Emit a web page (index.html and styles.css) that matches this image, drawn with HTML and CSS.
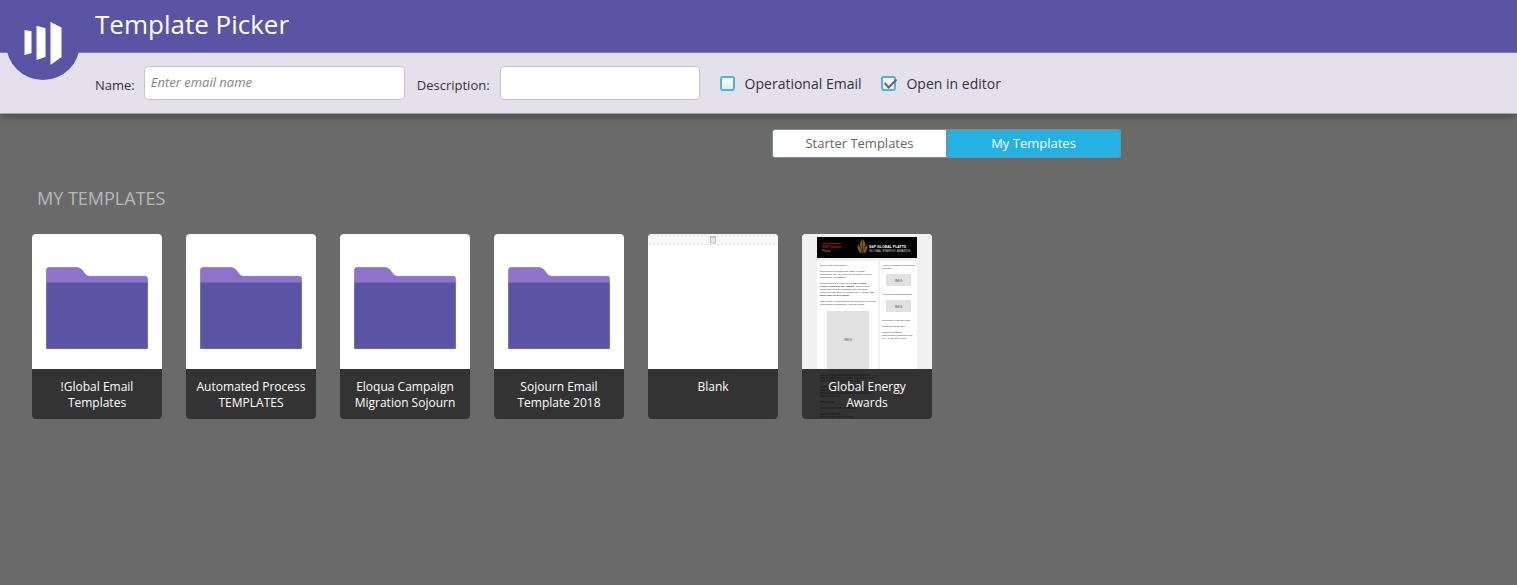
FILE: index.html
```html
<!DOCTYPE html>
<html lang="en">
<head>
<meta charset="utf-8">
<title>Template Picker</title>
<link rel="stylesheet" href="styles.css">
</head>
<body>
<svg class="defs" aria-hidden="true">
  <symbol id="folder" viewBox="0 0 102 82">
    <path d="M.5 82V3Q.5.5 3 .5h28q3 0 5 2.500l3.500 4.500q1.500 1.800 4 1.800h56q2 0 2 2V82z" fill="#8f72cc" stroke="#7a6ab4" stroke-width=".6"/>
    <path d="M.5 15.500h101V81.500H.5z" fill="#5a54a4"/>
  </symbol>
</svg>
<header class="header">
  <div class="titlebar">
    <svg class="logo" viewBox="0 0 74 74" role="img" aria-label="Logo">
      <circle cx="37" cy="37" r="37" fill="#5a54a4"/>
      <path d="M18.500 24l7 1.300v22L18.500 49zM30.500 19.700l9 2.600V51l-9 3zM44.500 16l11 5.500v29.500L44.500 59z" fill="#fff"/>
    </svg>
    <h1 class="title">Template Picker</h1>
  </div>
  <form class="toolbar">
    <label class="label" for="name">Name:</label>
    <input class="field field-name" id="name" type="text" placeholder="Enter email name">
    <label class="label" for="description">Description:</label>
    <input class="field field-description" id="description" type="text">
    <label class="option"><input class="check" type="checkbox">Operational Email</label>
    <label class="option"><input class="check" type="checkbox" checked>Open in editor</label>
  </form>
</header>
<main class="content">
  <div class="switcher">
    <button class="tab" type="button">Starter Templates</button>
    <button class="tab tab-active" type="button">My Templates</button>
  </div>
  <h2 class="heading">MY TEMPLATES</h2>
  <div class="cards">
    <article class="card"><div class="preview"><svg class="folder"><use href="#folder"/></svg></div><div class="caption">!Global Email<br>Templates</div></article>
    <article class="card"><div class="preview"><svg class="folder"><use href="#folder"/></svg></div><div class="caption">Automated Process<br>TEMPLATES</div></article>
    <article class="card"><div class="preview"><svg class="folder"><use href="#folder"/></svg></div><div class="caption">Eloqua Campaign<br>Migration Sojourn</div></article>
    <article class="card"><div class="preview"><svg class="folder"><use href="#folder"/></svg></div><div class="caption">Sojourn Email<br>Template 2018</div></article>
    <article class="card"><div class="preview">
      <svg class="thumb" viewBox="0 0 130 135">
        <path d="M0 0h130v11H0z" fill="#f7f7f9"/>
        <path d="M1 1.500h128M1 10.500h128" stroke="#dedee2" stroke-width=".7" stroke-dasharray="2 2"/>
        <rect x="62.500" y="3" width="5" height="6" fill="#e8e8e8" stroke="#b8b8b8" stroke-width=".8"/>
        <path d="M62 3h6" stroke="#aaa" stroke-width=".8"/>
      </svg></div><div class="caption">Blank</div></article>
    <article class="card"><div class="preview">
      <svg class="thumb" viewBox="0 0 130 135">
        <path d="M0 0h130v135H0z" fill="#f1f1f1"/>
        <path d="M15 27h61v108H15zM78 27h37v108H78z" fill="#fff"/>
        <path d="M15 3h100v21H15z" fill="#000"/>
        <path d="M20 9.500h19" stroke="#d6002a" stroke-width=".7"/>
        <g class="mail" font-size="3.500">
          <text x="20" y="13.500" fill="#d6002a" font-weight="bold">S&amp;P Global</text>
          <text x="20" y="17.500" fill="#999">Platts</text>
          <text x="67" y="13.500" fill="#fff" font-weight="bold">S&amp;P GLOBAL PLATTS</text>
          <text x="67" y="17.500" fill="#ccc" font-size="3.200">GLOBAL ENERGY AWARDS</text>
        </g>
        <path d="M60.500 5q4 4 2.500 8 2-1 1.800-3.500 2 5-1.800 9.500h-5q-4-5-1.500-9.500 0 2.500 1.500 3.500-1-4 2.500-8z" fill="#7d5b1c"/>
        <path d="M60.500 6v13M58.500 12l1 7M62.500 12l-1 7" stroke="#19130a" stroke-width=".6"/>
        <g class="mail" font-size="2.500" fill="#333">
          <text x="18" y="32">Dear {{lead.First Name}},</text>
          <text x="18" y="38">Exceptional professionals attain a global</text>
          <text x="18" y="41">recognition. Do you have an innovative project,</text>
          <text x="18" y="44">technology or strategy?</text>
          <text x="18" y="50">Nominations are open for the <tspan font-weight="bold">S&amp;P Global</tspan></text>
          <text x="18" y="53"><tspan font-weight="bold">Platts Global Energy Awards</tspan>. There are 19</text>
          <text x="18" y="56">categories for both business and individual</text>
          <text x="18" y="59">achievements. Enter by September 7, 2018. <tspan font-weight="bold">You</tspan></text>
          <text x="18" y="62" font-weight="bold">won't have to do it alone.</text>
          <text x="18" y="68">The category descriptions and rules help you build</text>
          <text x="18" y="71">a successful nomination, view the guide.</text>
          <text x="80" y="32">Award Presenting &amp; Reception</text>
          <text x="80" y="35">Sponsor</text>
          <text x="80" y="61">Award Presenting Sponsor</text>
          <text x="80" y="87">Interested in sponsoring?</text>
          <text x="80" y="93">Contact Matt Bonitto</text>
          <text x="80" y="99">Request Manager</text>
          <text x="80" y="102">Matt.bonitto@spglobal.com</text>
          <text x="80" y="105">Tel. +1 720 264 6678</text>
        </g>
        <path d="M84 40h25v12H84zM84 66h25v12H84zM25 77h42v58H25z" fill="#e1e1e1"/>
        <g class="mail" font-size="4" fill="#555" text-anchor="middle">
          <text x="96.500" y="47.500">IMG</text><text x="96.500" y="73.500">IMG</text><text x="46" y="106.500">IMG</text>
        </g>
      </svg></div><div class="caption">
      <svg class="ghost" viewBox="0 0 130 50" aria-hidden="true">
        <path d="M18 6h50M18 9h54M18 12h40M18 18h52M18 21h48M18 24h52M18 27h20M18 33h14M18 39h36M18 45h20M18 48h33" stroke="#242424" stroke-width="1.600" stroke-dasharray="5 .6 3 .6 7 .7"/>
      </svg>
      <span class="caption-text">Global Energy<br>Awards</span></div></article>
  </div>
</main>
</body>
</html>
```
FILE: styles.css
```css
* { box-sizing: border-box; }
body {
  margin: 0;
  min-height: 100vh;
  background: #6a6a6a;
  color: #333;
  font-family: "Open Sans", "Noto Sans", sans-serif;
}
.defs { display: none; }
.header {
  background: #e5e1ec;
  border-bottom: 1px solid #a5a2aa;
  box-shadow: 0 2px 8px rgba(0, 0, 0, 0.35);
}
.titlebar {
  position: relative;
  height: 53px;
  padding-left: 95px;
  background: #5a54a4;
  border-bottom: 1px solid #7f79b9;
}
.logo {
  position: absolute;
  left: 6px;
  top: 6px;
  width: 74px;
  height: 74px;
}
.title {
  margin: 0;
  color: #fff;
  font-size: 26px;
  font-weight: 400;
  line-height: 48px;
}
.toolbar {
  display: flex;
  align-items: center;
  height: 60px;
  padding-left: 95px;
}
.label { font-size: 13px; padding-top: 3px; }
.field {
  height: 34px;
  border: 1px solid #c4c4c8;
  border-radius: 4px;
  background: #fff;
  padding: 0 6px 2px;
  font: 13px "Open Sans", "Noto Sans", sans-serif;
}
.field::placeholder { color: #858585; font-style: italic; opacity: 1; }
.field-name { width: 261px; margin: 0 12px 0 9px; }
.field-description { width: 200px; margin-left: 10px; }
.option {
  display: flex;
  align-items: center;
  gap: 10px;
  margin-left: 20px;
  font-size: 14px;
}
.check {
  position: relative;
  appearance: none;
  width: 15px;
  height: 15px;
  margin: 0;
  border: 2px solid #45b8dc;
  border-radius: 3px;
  background: linear-gradient(#fff, #e8e8e8);
}
.check:checked::after {
  content: "";
  position: absolute;
  left: 4px;
  top: -2px;
  width: 5px;
  height: 10px;
  border: solid #666;
  border-width: 0 2px 2px 0;
  transform: rotate(45deg);
}
.content { padding: 15px 32px; }
.switcher {
  display: flex;
  width: 349px;
  margin-left: 740px;
}
.tab {
  flex: 1;
  height: 29px;
  padding: 0 0 2px;
  border: 1px solid #7b8c92;
  border-radius: 3px 0 0 3px;
  background: #fff;
  color: #666;
  font: 13px "Open Sans", "Noto Sans", sans-serif;
}
.tab-active {
  border-left: 0;
  border-radius: 0 3px 3px 0;
  background: #23b2e2;
  color: #fff;
}
.heading {
  margin: 27px 0 23px 5px;
  color: #b9b9b9;
  font-size: 18px;
  font-weight: 400;
  line-height: 26px;
}
.cards { display: flex; flex-wrap: wrap; gap: 24px; }
.card {
  width: 130px;
  border-radius: 4px;
  overflow: hidden;
  background: #333;
}
.preview {
  display: flex;
  justify-content: center;
  height: 135px;
  background: #fff;
}
.folder { width: 102px; height: 82px; margin-top: 33px; }
.thumb { width: 130px; height: 135px; }
.caption {
  position: relative;
  min-height: 50px;
  padding-top: 10px;
  color: #fff;
  font-size: 12px;
  line-height: 16px;
  text-align: center;
}
.ghost { position: absolute; left: 0; top: 0; width: 130px; height: 50px; }
.caption-text { position: relative; }
.mail { font-family: "Liberation Sans", Arial, sans-serif; }
```
